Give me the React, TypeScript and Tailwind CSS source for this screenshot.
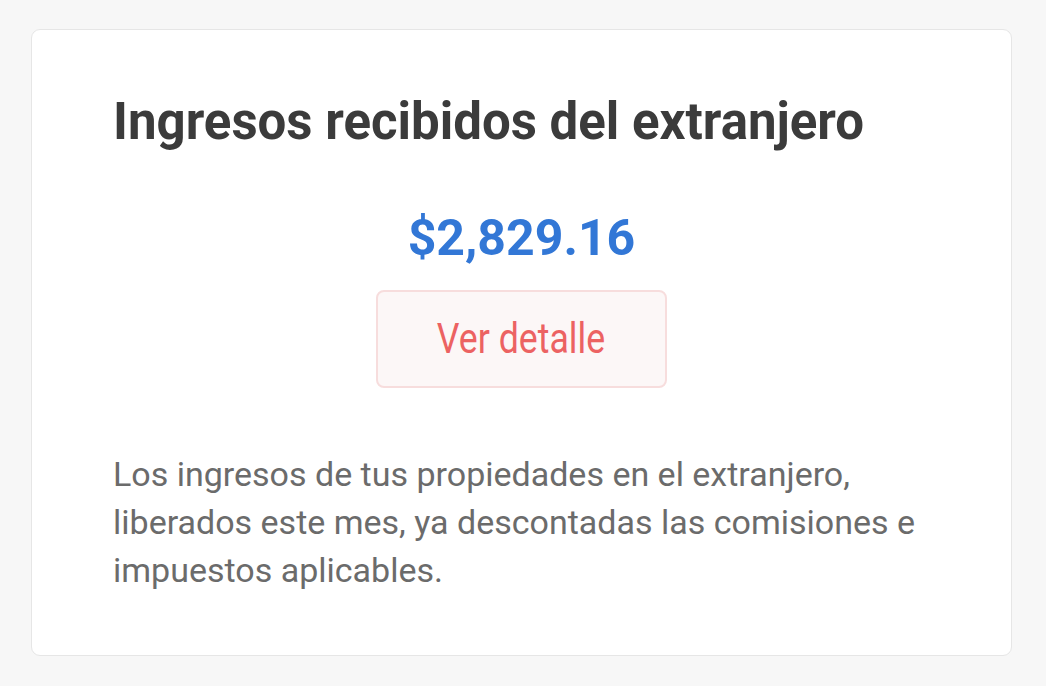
import React from "react";

export default function App() {
  return (
    <div className="min-h-[686px] w-full bg-[#f7f7f7] pt-[29px] pl-[31px]" style={{ fontFamily: "Roboto, 'Liberation Sans', sans-serif" }}>
      <div className="flex h-[627px] w-[981px] flex-col rounded-[9px] border border-[#e6e6e6] bg-white px-[81px] pt-[62px]">
        <h1 className="text-[51px] font-bold leading-[60px] text-[#3b3b3b]">Ingresos recibidos del extranjero</h1>
        <div className="mt-[58px] flex flex-col items-center">
          <div className="text-[50px] font-bold leading-[56px] text-[#3277d6]">$2,829.16</div>
          <button className="mt-[24px] flex h-[98px] w-[291px] items-center justify-center rounded-[8px] border-2 border-[#f7dddd] bg-[#fcf7f7]">
            <span className="inline-block scale-x-[0.85] text-[42px] leading-none text-[#ec6262]">Ver detalle</span>
          </button>
        </div>
        <p className="mt-[62px] text-[34px] leading-[48px] text-[#6b6b6b]">
          Los ingresos de tus propiedades en el extranjero, liberados este mes, ya descontadas las comisiones e impuestos aplicables.
        </p>
      </div>
    </div>
  );
}
